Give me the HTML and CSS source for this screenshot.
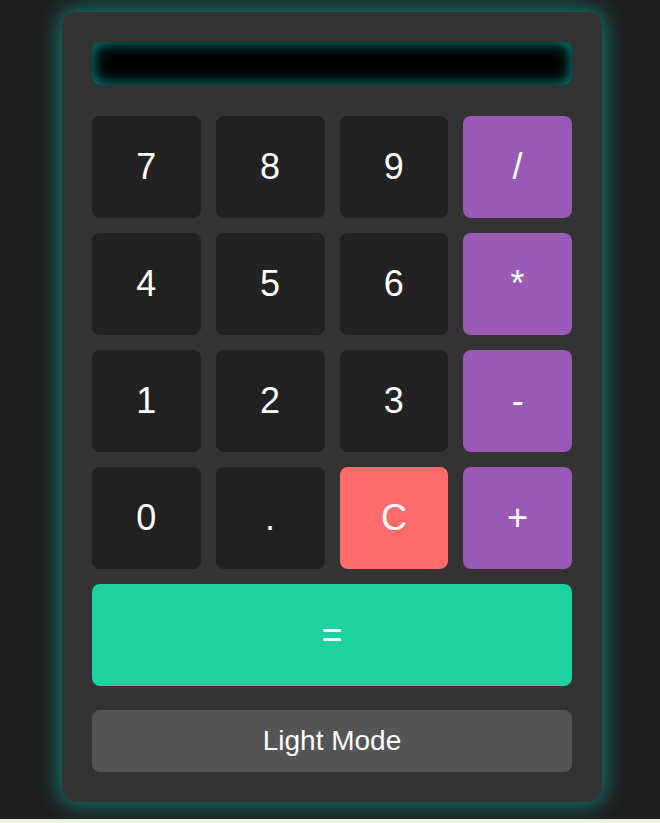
FILE: index.html
```html
<!DOCTYPE html>
<html>
<head>
<meta charset="utf-8">
<link rel="stylesheet" href="styles.css">
</head>
<body>
<div class="page">
  <div class="calc">
    <div class="display"></div>
    <div class="keys">
      <button class="key">7</button>
      <button class="key">8</button>
      <button class="key">9</button>
      <button class="key op">/</button>
      <button class="key">4</button>
      <button class="key">5</button>
      <button class="key">6</button>
      <button class="key op">*</button>
      <button class="key">1</button>
      <button class="key">2</button>
      <button class="key">3</button>
      <button class="key op">-</button>
      <button class="key">0</button>
      <button class="key">.</button>
      <button class="key clear">C</button>
      <button class="key op">+</button>
      <button class="key equals">=</button>
    </div>
    <button class="mode">Light Mode</button>
  </div>
</div>
</body>
</html>
```
FILE: styles.css
```css
html {
  background: #eef3de;
}
body {
  margin: 0;
  font-family: "Liberation Sans", Arial, sans-serif;
}
.page {
  height: 819px;
  box-sizing: border-box;
  padding: 12px 0 0 4px;
  background: #1f1f1f;
  display: flex;
  align-items: flex-start;
  justify-content: center;
}
.calc {
  width: 480px;
  padding: 30px;
  background: #333333;
  border-radius: 15px;
  box-shadow: 0 0 25px rgba(0, 190, 178, 0.75);
  display: flex;
  flex-direction: column;
}
.display {
  height: 43px;
  background: #000;
  border-radius: 8px;
  box-shadow: inset 0 0 16px rgba(0, 210, 200, 0.75);
  margin-bottom: 31px;
}
.keys {
  display: grid;
  grid-template-columns: repeat(4, 1fr);
  gap: 15.5px 15px;
}
.key {
  border: none;
  border-radius: 8px;
  background: #222222;
  color: #fff;
  font-family: "Liberation Sans", Arial, sans-serif;
  font-size: 36px;
  height: 101.5px;
  padding: 0;
}
.key.op {
  background: #9b59b6;
}
.key.clear {
  background: #ff6b6b;
}
.key.equals {
  background: #1dd1a1;
  grid-column: 1 / -1;
}
.mode {
  margin-top: 24px;
  height: 62px;
  border: none;
  border-radius: 8px;
  background: #555555;
  color: #fff;
  font-family: "Liberation Sans", Arial, sans-serif;
  font-size: 28px;
}
```
